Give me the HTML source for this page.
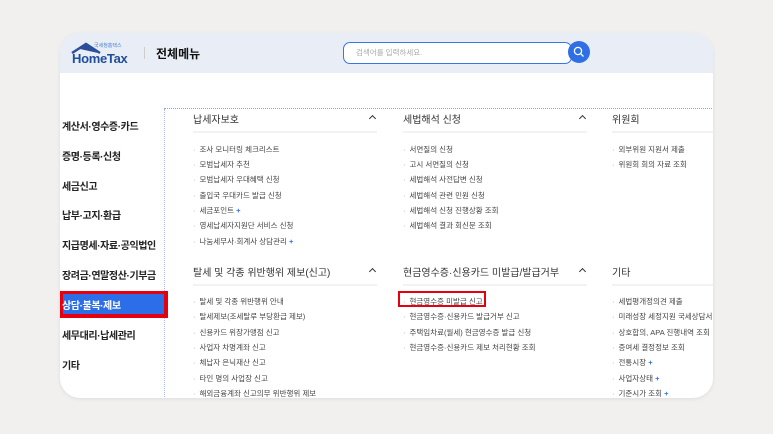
<!DOCTYPE html>
<html><head><meta charset="utf-8"><style>
body{margin:0;width:773px;height:434px;background:#f1f0ef;font-family:"Liberation Sans","Noto Sans CJK KR",sans-serif;position:relative;overflow:hidden}
.card{position:absolute;left:60px;top:33px;width:653px;height:365px;background:#fff;border-radius:20px;overflow:hidden;box-shadow:0 1px 4px rgba(0,0,0,.08)}
.hdr{position:absolute;left:0;top:0;width:653px;height:40px;background:#e8edf6}
.a{position:absolute;white-space:nowrap}
.lm{position:absolute;left:2px;font-size:10px;font-weight:bold;color:#222;letter-spacing:-.4px;white-space:nowrap}
.h{position:absolute;font-size:10px;color:#333}
.it{position:absolute;font-size:7.5px;color:#444;white-space:nowrap}
.it:before{content:"·";color:#999;margin-right:4px}
.pl{color:#2a6be0;font-weight:bold}
.ul{position:absolute;height:2px;background:#f1f2f4}
.chev{position:absolute;width:4px;height:4px;border-left:1.3px solid #333;border-top:1.3px solid #333;transform:rotate(45deg)}
</style></head><body>
<div class="card">
<div class="hdr"></div>
<svg class="a" style="left:10px;top:8px" width="62" height="24" viewBox="0 0 62 24"><path d="M2 12 L16 3 L30 12" fill="none" stroke="#2a4f9a" stroke-width="2.5"/><path d="M10 8 L16 4 L28 12" fill="#2a4f9a"/></svg>
<div class="a" style="left:12px;top:18px;font-size:13px;font-weight:bold;color:#1f4e9c;letter-spacing:-.3px">HomeTax</div>
<div class="a" style="left:34px;top:9px;font-size:5px;color:#4a7fd0">국세청홈택스</div>
<div class="a" style="left:84px;top:14px;width:1px;height:12px;background:#ccc"></div>
<div class="a" style="left:96px;top:12px;font-size:12px;font-weight:bold;color:#111">전체메뉴</div>
<div class="a" style="left:283px;top:9px;width:227px;height:20px;border:1px solid #3a76e0;border-radius:7px;background:#fff"></div>
<div class="a" style="left:296px;top:14px;font-size:7.5px;color:#aaa">검색어를 입력하세요.</div>
<div class="a" style="left:508px;top:8px;width:22px;height:22px;border-radius:50%;background:#2f6fe6"></div>
<svg class="a" style="left:513px;top:13px" width="12" height="12"><circle cx="5" cy="5" r="3.6" fill="none" stroke="#fff" stroke-width="1.3"/><path d="M7.6 7.6 L10.5 10.5" stroke="#fff" stroke-width="1.3"/></svg>

<div class="a" style="left:104px;top:75px;width:560px;border-top:1px dotted #8aa3e0"></div>
<div class="a" style="left:104px;top:76px;height:300px;border-left:1px dotted #a8b8e8"></div>

<div class="lm" style="top:85px">계산서·영수증·카드</div>
<div class="lm" style="top:115px">증명·등록·신청</div>
<div class="lm" style="top:145px">세금신고</div>
<div class="lm" style="top:174px">납부·고지·환급</div>
<div class="lm" style="top:204px">지급명세·자료·공익법인</div>
<div class="lm" style="top:234px">장려금·연말정산·기부금</div>
<div class="a" style="left:0;top:258px;width:108px;height:27px;background:#e4000f"></div>
<div class="a" style="left:3px;top:261px;width:101px;height:20px;background:#2c6ee8"></div>
<div class="lm" style="top:264px;color:#fff">상담·불복·제보</div>
<div class="lm" style="top:294px">세무대리·납세관리</div>
<div class="lm" style="top:324px">기타</div>

<div class="h" style="left:133px;top:78px">납세자보호</div><div class="chev" style="left:310px;top:83px"></div>
<div class="ul" style="left:133px;top:98px;width:184px"></div>
<div class="h" style="left:343px;top:78px">세법해석 신청</div><div class="chev" style="left:520px;top:83px"></div>
<div class="ul" style="left:343px;top:98px;width:184px"></div>
<div class="h" style="left:552px;top:78px">위원회</div>
<div class="ul" style="left:552px;top:98px;width:110px"></div>

<div class="it" style="left:133px;top:111px">조사 모니터링 체크리스트</div>
<div class="it" style="left:133px;top:126px">모범납세자 추천</div>
<div class="it" style="left:133px;top:141px">모범납세자 우대혜택 신청</div>
<div class="it" style="left:133px;top:157px">출입국 우대카드 발급 신청</div>
<div class="it" style="left:133px;top:172px">세금포인트 <span class="pl">+</span></div>
<div class="it" style="left:133px;top:187px">영세납세자지원단 서비스 신청</div>
<div class="it" style="left:133px;top:203px">나눔세무사·회계사 상담관리 <span class="pl">+</span></div>

<div class="it" style="left:343px;top:111px">서면질의 신청</div>
<div class="it" style="left:343px;top:126px">고시 서면질의 신청</div>
<div class="it" style="left:343px;top:141px">세법해석 사전답변 신청</div>
<div class="it" style="left:343px;top:157px">세법해석 관련 민원 신청</div>
<div class="it" style="left:343px;top:172px">세법해석 신청 진행상황 조회</div>
<div class="it" style="left:343px;top:187px">세법해석 결과 회신문 조회</div>

<div class="it" style="left:552px;top:111px">외부위원 지원서 제출</div>
<div class="it" style="left:552px;top:126px">위원회 회의 자료 조회</div>

<div class="h" style="left:133px;top:231px">탈세 및 각종 위반행위 제보(신고)</div><div class="chev" style="left:310px;top:236px"></div>
<div class="ul" style="left:133px;top:251px;width:184px"></div>
<div class="h" style="left:343px;top:231px">현금영수증·신용카드 미발급/발급거부</div><div class="chev" style="left:520px;top:236px"></div>
<div class="ul" style="left:343px;top:251px;width:184px"></div>
<div class="h" style="left:552px;top:231px">기타</div>
<div class="ul" style="left:552px;top:251px;width:110px"></div>

<div class="it" style="left:133px;top:263px">탈세 및 각종 위반행위 안내</div>
<div class="it" style="left:133px;top:278px">탈세제보(조세탈루 부당환급 제보)</div>
<div class="it" style="left:133px;top:294px">신용카드 위장가맹점 신고</div>
<div class="it" style="left:133px;top:309px">사업자 차명계좌 신고</div>
<div class="it" style="left:133px;top:324px">체납자 은닉재산 신고</div>
<div class="it" style="left:133px;top:340px">타인 명의 사업장 신고</div>
<div class="it" style="left:133px;top:355px">해외금융계좌 신고의무 위반행위 제보</div>

<div class="a" style="left:338px;top:258px;width:88px;height:16px;border:2.5px solid #e4000f;box-sizing:border-box"></div>
<div class="it" style="left:343px;top:263px">현금영수증 미발급 신고</div>
<div class="it" style="left:343px;top:278px">현금영수증·신용카드 발급거부 신고</div>
<div class="it" style="left:343px;top:294px">주택임차료(월세) 현금영수증 발급 신청</div>
<div class="it" style="left:343px;top:309px">현금영수증·신용카드 제보 처리현황 조회</div>

<div class="it" style="left:552px;top:263px">세법평개정의견 제출</div>
<div class="it" style="left:552px;top:278px">미래성장 세정지원 국세상담서비스</div>
<div class="it" style="left:552px;top:294px">상호합의, APA 진행내역 조회</div>
<div class="it" style="left:552px;top:309px">증여세 결정정보 조회</div>
<div class="it" style="left:552px;top:324px">전통시장 <span class="pl">+</span></div>
<div class="it" style="left:552px;top:340px">사업자상태 <span class="pl">+</span></div>
<div class="it" style="left:552px;top:355px">기준시가 조회 <span class="pl">+</span></div>
</div>
</body></html>
